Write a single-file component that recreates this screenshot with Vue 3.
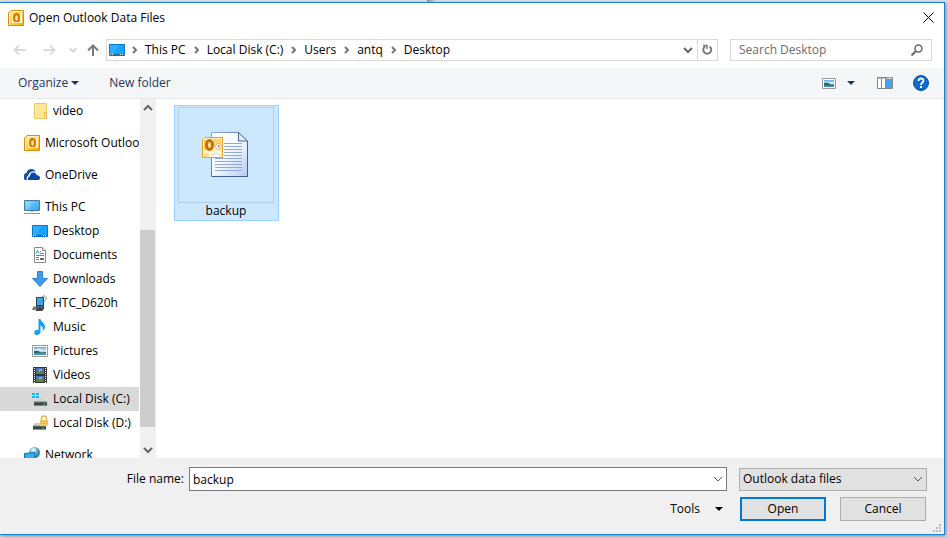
<script setup>
import { ref } from 'vue'

const crumbs = ['This PC', 'Local Disk (C:)', 'Users', 'antq', 'Desktop']
const groups = [
  [{ label: 'video', icon: 'folder', child: true }],
  [{ label: 'Microsoft Outlook', icon: 'outlook' }],
  [{ label: 'OneDrive', icon: 'onedrive' }],
  [
    { label: 'This PC', icon: 'pc' },
    { label: 'Desktop', icon: 'desktop', child: true },
    { label: 'Documents', icon: 'documents', child: true },
    { label: 'Downloads', icon: 'downloads', child: true },
    { label: 'HTC_D620h', icon: 'device', child: true },
    { label: 'Music', icon: 'music', child: true },
    { label: 'Pictures', icon: 'pictures', child: true },
    { label: 'Videos', icon: 'videos', child: true },
    { label: 'Local Disk (C:)', icon: 'diskc', child: true },
    { label: 'Local Disk (D:)', icon: 'diskd', child: true },
  ],
  [{ label: 'Network', icon: 'network' }],
]
const selected = ref('Local Disk (C:)')
const fileName = ref('backup')
const search = ref('')
</script>

<template>
  <svg class="sprite" aria-hidden="true">
    <defs>
      <linearGradient id="g-gold" x1="0" y1="0" x2="1" y2="1">
        <stop offset="0" stop-color="#fff0a0" /><stop offset=".5" stop-color="#fdd040" /><stop offset="1" stop-color="#f5a623" />
      </linearGradient>
      <linearGradient id="g-screen" x1="0" y1="0" x2="1" y2="1">
        <stop offset="0" stop-color="#8ad4ff" /><stop offset="1" stop-color="#2ba4f2" />
      </linearGradient>
      <linearGradient id="g-page" x1="0" y1="0" x2="1" y2="1">
        <stop offset="0" stop-color="#ffffff" /><stop offset=".5" stop-color="#f4f8ff" /><stop offset="1" stop-color="#b4caf4" />
      </linearGradient>
      <linearGradient id="g-photo" x1="0" y1="0" x2="0" y2="1">
        <stop offset="0" stop-color="#5aa5e4" /><stop offset=".5" stop-color="#e2f3fb" /><stop offset=".7" stop-color="#5d9bb4" /><stop offset="1" stop-color="#3a86c0" />
      </linearGradient>
      <linearGradient id="g-edge" x1="0" y1="0" x2="1" y2="1">
        <stop offset="0" stop-color="#8fa9d4" /><stop offset="1" stop-color="#2f4f8c" />
      </linearGradient>
      <radialGradient id="g-globe" cx=".35" cy=".3" r=".8">
        <stop offset="0" stop-color="#c8ecf8" /><stop offset=".5" stop-color="#56a8cc" /><stop offset="1" stop-color="#1c6894" />
      </radialGradient>
    </defs>
    <symbol id="folder" viewBox="0 0 16 16">
      <path d="M2.500.5h12v15h-12z" fill="#ffe793" stroke="#e9ca68" />
      <path d="M12.500 9.500h2v6h-2z" fill="#ffeeb0" stroke="#e0bd55" />
    </symbol>
    <symbol id="outlook" viewBox="0 0 16 16">
      <path d="M3 .5h12.500v15H.5V3z" fill="url(#g-gold)" stroke="#dc8b12" />
      <path d="M3.500 1.500h11v1M1.500 3.500v11h1" fill="none" stroke="#fff6cc" />
      <path d="M4.500 3v8.500h9" fill="none" stroke="#fff2b4" />
      <path d="M12 3h2v9l-2 1z" fill="#fff6d8" />
      <ellipse cx="8.500" cy="8" rx="2.500" ry="3.800" fill="#ffe48c" stroke="#d97a08" stroke-width="2.200" />
      <path d="M4 12.500h10" stroke="#fff2c0" />
    </symbol>
    <symbol id="onedrive" viewBox="0 0 16 16">
      <path d="M0 11.500V9c0-2 1-3 2.500-3C3 3.500 5 2 7.500 2 9.500 2 11 3 12 5 7.500 4 5 6 4.500 9 3 9.500 2.500 11 3.500 13H2c-1 0-2 0-2-1.500z" fill="#0f4fa8" />
      <path d="M4.500 9C5 6 7.500 4 12 5M3.500 13C2.500 11 3 9.500 4.500 9" fill="none" stroke="#fff" stroke-width=".8" />
      <path d="M4.500 13C3 12 4 9.500 6 9.500 6 6.500 8 5 10 5.500c1.500.3 2.500 1.500 2.800 2.700C15 8 16 9.500 16 11c0 1.500-1 2-2 2z" fill="#0c47a5" />
    </symbol>
    <symbol id="pc" viewBox="0 0 16 16">
      <path d="M.5 1.500h15v10H.5z" fill="url(#g-screen)" stroke="#447f9f" />
      <path d="M2 3h6L5 10H2z" fill="#fff" opacity=".2" />
      <path d="M6 12h4v1H6z" fill="#b9cbd8" /><path d="M0 14.500h16" stroke="#8296a4" />
    </symbol>
    <symbol id="desktop" viewBox="0 0 16 16">
      <path d="M.5 2.500h15v11H.5z" fill="#15a3ff" stroke="#0876c0" />
      <path d="M1 3h9L4 12H1z" fill="#fff" opacity=".12" />
      <path d="M1 12.500h14" stroke="#0f6fb8" /><path d="M1 12.500h1m1 0h1m7 0h1m1 0h1" stroke="#fff" />
    </symbol>
    <symbol id="documents" viewBox="0 0 16 16">
      <path d="M2.500.5h8l3 3v12h-11z" fill="#fff" stroke="#8a8a8a" /><path d="M10.500.5v3h3" fill="#eee" stroke="#8a8a8a" />
      <path d="M4 6.500l1.500-3L7 6.500M8 4.500h1M8 6.500h4M4 8.500h8M4 10.500h3M4 12.500h3" fill="none" stroke="#1d9de5" />
      <path d="M8 11h4v2H8z" fill="#536b88" />
    </symbol>
    <symbol id="downloads" viewBox="0 0 16 16">
      <path d="M5.500.5h5v7h5L8 15.500.5 7.500h5z" fill="#3f9ae8" stroke="#347fc4" />
    </symbol>
    <symbol id="device" viewBox="0 0 16 16">
      <path d="M9 3c1-3 6-3 5 1-.5 2-2 1-2 3" fill="none" stroke="#909090" />
      <path d="M4 2h8v12l-2 2H4z" fill="#38434c" /><path d="M5 3h6v7H5z" fill="#38a7f2" />
      <path d="M6 12h1m2 0h1" stroke="#ddd" /><path d="M0 14l2-3 3 2v2H1z" fill="#777" />
    </symbol>
    <symbol id="music" viewBox="0 0 16 16">
      <path d="M6.500 0h2c.5 3 4.500 4 4.500 7.500 0 2-1 3.500-2.500 4.500C11.500 9 10 7 8.500 6.500V13c0 2-2 3-3.700 3C3 16 2 15 2.200 13.500c.3-2 2.300-3 4.300-2.500z" fill="#19a0f4" />
    </symbol>
    <symbol id="pictures" viewBox="0 0 16 16">
      <path d="M.5 2.500h15v11H.5z" fill="#fff" stroke="#9a9a9a" /><path d="M2 4h12v8H2z" fill="url(#g-photo)" />
      <path d="M2 8q4-1 6 1 3 1 6 0v1H2z" fill="#2d665c" /><path d="M4 7q3-3 6 0z" fill="#fff" opacity=".7" />
    </symbol>
    <symbol id="videos" viewBox="0 0 16 16">
      <path d="M1 0h14v16H1z" fill="#363636" /><path d="M2.500 1v15M13.500 1v15" stroke="#fff" stroke-dasharray="1 1" />
      <path d="M4 1h8v6H4zM4 9h8v6H4z" fill="#3e76cc" />
      <path d="M7 2h3v3H7zM7 10h3v2H7z" fill="#e2a11c" /><path d="M4 5h3v2H4zM9 5h3v2H9zM4 13h8v2H4z" fill="#518a38" /><path d="M8 4h2v1H8z" fill="#d8391c" />
    </symbol>
    <symbol id="drive" viewBox="0 0 16 16">
      <path d="M3 8h10l2 3H1z" fill="#cfd3d4" /><path d="M1 11h14v4H1z" fill="#3e4448" /><path d="M1 11.500h14" stroke="#6b7174" /><path d="M11 13h2v1h-2z" fill="#49e36a" />
    </symbol>
    <symbol id="diskc" viewBox="0 0 16 16">
      <use href="#drive" x="1" y="0" width="15" height="16" />
      <path d="M0 2h3v2H0zM4 2h3v2H4zM0 5h3v2H0zM4 5h3v2H4z" fill="#16b6f2" />
    </symbol>
    <symbol id="diskd" viewBox="0 0 16 16">
      <use href="#drive" x="0" y="0" width="15" height="16" />
      <path d="M9.500 5V3.500c0-3.500 5-3.500 5 0V5" fill="none" stroke="#e4b94e" stroke-width="1.500" /><path d="M8 5h8v6H8z" fill="#f5cd62" /><path d="M8 6.500h8M8 8.500h8" stroke="#e9b846" />
    </symbol>
    <symbol id="network" viewBox="0 0 16 16">
      <circle cx="10.500" cy="5.500" r="5.500" fill="url(#g-globe)" /><path d="M8 2q3-2 4 0t-2 3q-3 0-2-3z" fill="#dff4fa" opacity=".7" />
      <path d="M.5 6.500l10-1v8l-10-1z" fill="#35aef4" stroke="#146fa8" /><path d="M3 15h6" stroke="#8296a4" />
    </symbol>
    <symbol id="chevron" viewBox="0 0 10 10">
      <path d="M1 3l4 4 4-4" fill="none" stroke="currentColor" stroke-width="var(--w, 1)" />
    </symbol>
    <symbol id="caret" viewBox="0 0 8 4"><path d="M0 0h8L4 4z" fill="currentColor" /></symbol>
  </svg>

  <div class="backdrop">
    <main class="dialog">
      <header class="title">
        <svg class="ico"><use href="#outlook" /></svg>
        <h1>Open Outlook Data Files</h1>
        <button class="close" aria-label="Close">
          <svg width="11" height="11" viewBox="0 0 11 11"><path d="M.5.5l10 10m0-10l-10 10" stroke="#000" /></svg>
        </button>
      </header>

      <div class="address">
        <button class="nav back" aria-label="Back" disabled>
          <svg width="13" height="12" viewBox="0 0 13 12"><path d="M12.500 6H1.500M6 1.500L1.500 6 6 10.500" fill="none" stroke="#dadada" stroke-width="2" /></svg>
        </button>
        <button class="nav forward" aria-label="Forward" disabled>
          <svg width="13" height="12" viewBox="0 0 13 12"><path d="M.5 6h11M7 1.500L11.500 6 7 10.500" fill="none" stroke="#dadada" stroke-width="2" /></svg>
        </button>
        <button class="nav recent" aria-label="Recent locations" disabled>
          <svg class="small"><use href="#chevron" /></svg>
        </button>
        <button class="nav up" aria-label="Up">
          <svg width="12" height="12" viewBox="0 0 12 12"><path d="M6 12V1.500M1 6.500l5-5 5 5" fill="none" stroke="#7a7a7a" stroke-width="2" /></svg>
        </button>
        <div class="path">
          <svg class="ico"><use href="#desktop" /></svg>
          <template v-for="c in crumbs" :key="c">
            <svg class="sep" width="5" height="8" viewBox="0 0 5 8"><path d="M1 1l3 3-3 3" fill="none" stroke="#777" stroke-width="2" /></svg>
            <a href="#">{{ c }}</a>
          </template>
          <button class="drop" aria-label="Previous locations"><svg class="chev"><use href="#chevron" /></svg></button>
          <button class="refresh" aria-label="Refresh">
            <svg width="11" height="12" viewBox="0 0 11 12"><path d="M7.500 2.500a4 4 0 1 1-4.500 0" fill="none" stroke="#777" stroke-width="2" /><path d="M1 1.500h4V5" fill="none" stroke="#777" stroke-width="1.500" /></svg>
          </button>
        </div>
        <label class="search">
          <input v-model="search" type="search" placeholder="Search Desktop" aria-label="Search Desktop" />
          <svg width="12" height="12" viewBox="0 0 12 12"><circle cx="7.500" cy="4.500" r="3.500" fill="none" stroke="#6b6b6b" stroke-width="1.500" /><path d="M5 7l-4.500 4.500" stroke="#6b6b6b" stroke-width="2" /></svg>
        </label>
      </div>

      <div class="toolbar">
        <button>Organize <svg class="caret"><use href="#caret" /></svg></button>
        <button class="new">New folder</button>
        <div class="views">
          <button aria-label="Change view">
            <svg width="14" height="11" viewBox="0 0 14 11"><path d="M.5.5h13v10H.5z" fill="#fff" stroke="#999" /><path d="M2 2h10v7H2z" fill="url(#g-photo)" /><path d="M2 5q4-1 6 1 2 1 4 0v1q-6 1-10 0z" fill="#2d665c" /></svg>
          </button>
          <button aria-label="View options"><svg class="caret"><use href="#caret" /></svg></button>
          <button class="pane" aria-label="Show preview pane">
            <svg width="16" height="12" viewBox="0 0 16 12"><path d="M.5.5h15v11H.5z" fill="#fff" stroke="#868686" /><path d="M0 1h16M4.500 1v10M8.500 1v10" stroke="#868686" /><path d="M9 2h6v9H9z" fill="#4aa3ea" /><path d="M11.500 1h3" stroke="#fff" stroke-dasharray="1 1" /></svg>
          </button>
          <button class="help" aria-label="Help">
            <svg width="16" height="16" viewBox="0 0 16 16"><circle cx="8" cy="8" r="7.500" fill="#0a6ccc" stroke="#07539c" /><path d="M5.500 6c0-3.300 5-3.300 5-.3C10.500 7.500 8 7.500 8 10" fill="none" stroke="#fff" stroke-width="1.800" /><path d="M7 11h2v2H7z" fill="#fff" /></svg>
          </button>
        </div>
      </div>

      <div class="body">
        <nav class="tree">
          <ul v-for="(g, n) in groups" :key="n">
            <li v-for="i in g" :key="i.label">
              <a href="#" :class="{ child: i.child, on: i.label === selected }" @click.prevent="selected = i.label">
                <svg class="ico"><use :href="'#' + i.icon" /></svg>{{ i.label }}
              </a>
            </li>
          </ul>
        </nav>
        <div class="scroll">
          <button aria-label="Scroll up"><svg class="chev flip"><use href="#chevron" /></svg></button>
          <div class="track"><div class="thumb"></div></div>
          <button aria-label="Scroll down"><svg class="chev"><use href="#chevron" /></svg></button>
        </div>
        <section class="files">
          <button class="file">
            <span class="thumbnail">
              <svg width="48" height="46" viewBox="0 0 48 46">
                <path d="M9.500.5h27l9 9v35h-36z" fill="url(#g-page)" stroke="url(#g-edge)" />
                <path d="M45.500 9v35.500H10" fill="none" stroke="#3e5f9e" />
                <path d="M36.500.5v8.500h9z" fill="#e4eeff" stroke="#456199" />
                <path d="M22 11.500h18M22 14.500h18M22 17.500h18M22 20.500h18M22 23.500h18M13 26.500h27M13 29.500h27M13 32.500h27M13 35.500h27M13 38.500h27" stroke="#91a8d2" />
                <path d="M3 5.500h17.500v20H.5V8z" fill="#fff2bd" stroke="#e2a324" />
                <path d="M2 8h8v10H2z" fill="#f9cf57" /><path d="M11 7h8v7h-8z" fill="#fbd56c" />
                <ellipse cx="7.500" cy="13" rx="3" ry="4.500" fill="#ffe08a" stroke="#c2700c" stroke-width="3" />
                <circle cx="16.500" cy="14.500" r="3" fill="#fff" stroke="#eda878" /><path d="M16.500 13v2h1.500" fill="none" stroke="#c96d42" />
                <path d="M7 20l6-1 5 1v5H7z" fill="#fff" /><path d="M9 23l5-2 4 2" fill="none" stroke="#f0cf83" /><path d="M2 21h5v4H2z" fill="#fce18e" />
              </svg>
            </span>
            <span>backup</span>
          </button>
        </section>
      </div>

      <form class="footer" @submit.prevent>
        <div class="line">
          <label class="name" for="fname">File name:</label>
          <div class="combo">
            <input id="fname" v-model="fileName" type="text" />
            <button type="button" aria-label="Show file names"><svg class="thin"><use href="#chevron" /></svg></button>
          </div>
          <div class="type">
            <select aria-label="File type"><option>Outlook data files</option></select>
            <svg class="thin"><use href="#chevron" /></svg>
          </div>
        </div>
        <div class="line actions">
          <button type="button" class="tools">Tools <svg class="caret"><use href="#caret" /></svg></button>
          <button class="push primary">Open</button>
          <button type="button" class="push">Cancel</button>
        </div>
        <svg class="grip" width="8" height="8" viewBox="0 0 8 8"><path d="M6 0h2v2H6zM3 3h2v2H3zM6 3h2v2H6zM0 6h2v2H0zM3 6h2v2H3zM6 6h2v2H6z" fill="#bcbcbc" /></svg>
      </form>
    </main>
  </div>
</template>

<style>
body { margin: 0; background: #d8d8d8; }
</style>

<style scoped>
* { box-sizing: border-box; }
.sprite { position: absolute; width: 0; height: 0; }
.backdrop {
  height: 100vh;
  padding: 2px 3px 3px 0;
  background: linear-gradient(90deg, #dedede 45%, #888 45%, #dedede 46%) top / 100% 2px no-repeat #d8d8d8;
  font: 12px/16px "Open Sans", "Noto Sans", sans-serif;
  color: #000;
}
.dialog {
  display: flex;
  flex-direction: column;
  height: 100%;
  background: #fff;
  border: 1px solid #1883d7;
  border-left: 0;
  box-shadow: 1px 1px 3px #888;
}
button, input, select { font: inherit; color: inherit; }
button { display: flex; align-items: center; justify-content: center; padding: 0; border: 0; background: none; }
a { color: inherit; text-decoration: none; }
svg { flex: none; }
.ico { width: 16px; height: 16px; }
.chev { width: 10px; height: 10px; color: #666; --w: 2; }
.thin { width: 10px; height: 10px; color: #555; --w: 1; }
.small { width: 8px; height: 8px; color: #d0d0d0; --w: 2; }
.flip { transform: rotate(180deg); }
.caret { width: 8px; height: 4px; }

.title { display: flex; align-items: center; gap: 5px; height: 29px; padding: 0 10px 0 8px; flex: none; }
.title h1 { flex: 1; margin: 0; font-size: 12px; font-weight: 400; }

.address { display: flex; align-items: center; height: 36px; padding: 0 12px 0 13px; flex: none; }
.forward { margin-left: 17px; }
.recent { margin-left: 13px; }
.up { margin: 0 7px 0 10px; }
.path { display: flex; align-items: center; flex: 1; height: 22px; padding-left: 2px; border: 1px solid #d9d9d9; }
.path .sep { margin: 0 8px; }
.path .sep:nth-of-type(2) { margin-left: 7px; }
.drop { margin-left: auto; width: 18px; height: 20px; }
.refresh { width: 20px; height: 20px; border-left: 1px solid #d9d9d9; }
.search { display: flex; align-items: center; width: 202px; height: 22px; margin-left: 12px; padding: 0 8px; border: 1px solid #d9d9d9; }
.search input { flex: 1; min-width: 0; padding: 0; border: 0; outline: 0; background: none; appearance: none; }
.search input::placeholder { color: #6d6d6d; opacity: 1; }

.toolbar { display: flex; align-items: center; height: 31px; padding: 0 15px 0 18px; background: #f5f6f7; border-bottom: 1px solid #e5e6e8; color: #1e395b; flex: none; }
.toolbar button { gap: 3px; }
.new { margin-left: 30px; }
.views { display: flex; align-items: center; gap: 11px; margin-left: auto; }
.pane { margin-left: 11px; }
.help { margin-left: 9px; }

.body { display: flex; flex: 1; min-height: 0; }
.tree { width: 139px; overflow: hidden; }
.tree ul { margin: 0 0 8px; padding: 0; list-style: none; }
.tree a { display: flex; align-items: center; gap: 5px; height: 24px; padding-left: 24px; white-space: nowrap; }
.tree .child { padding-left: 32px; }
.tree .on { background: #d9d9d9; }
.scroll { display: flex; flex-direction: column; width: 16px; margin-left: 1px; background: #f0f0f0; border-right: 1px solid #f0f0f0; flex: none; }
.scroll button { height: 17px; }
.track { flex: 1; padding-top: 114px; }
.thumb { height: 197px; background: #cdcdcd; }
.files { flex: 1; padding: 6px 18px; }
.file { flex-direction: column; justify-content: flex-start; width: 105px; height: 116px; padding: 1px 1px 0 0; border: 1px solid #99d1ff; background: #cce8ff; }
.thumbnail { display: flex; align-items: center; justify-content: center; width: 96px; height: 96px; border: 1px solid #b5cfe2; }

.footer { position: relative; height: 76px; padding: 9px 17px 0 0; background: #f0f0f0; flex: none; }
.line { display: flex; align-items: center; height: 24px; }
.name { width: 189px; padding-right: 5px; text-align: right; }
.combo { display: flex; flex: 1; height: 24px; border: 1px solid #7a7a7a; background: #fff; }
.combo input { flex: 1; min-width: 0; padding: 2px 3px 0; border: 0; outline: 0; background: none; }
.combo button { width: 17px; }
.type { display: grid; align-items: center; width: 188px; height: 23px; margin-left: 12px; }
.type > * { grid-area: 1 / 1; }
.type select { width: 100%; height: 23px; padding: 0 3px; border: 1px solid #adadad; border-radius: 0; background: #e1e1e1; appearance: none; }
.type svg { justify-self: end; margin-right: 4px; pointer-events: none; }
.actions { justify-content: flex-end; gap: 14px; margin-top: 6px; padding-right: 1px; }
.tools { gap: 15px; margin-right: 3px; }
.push { width: 86px; height: 24px; border: 1px solid #adadad; background: #e1e1e1; }
.primary { border: 2px solid #0078d7; }
.grip { position: absolute; right: 3px; bottom: 2px; }
</style>
